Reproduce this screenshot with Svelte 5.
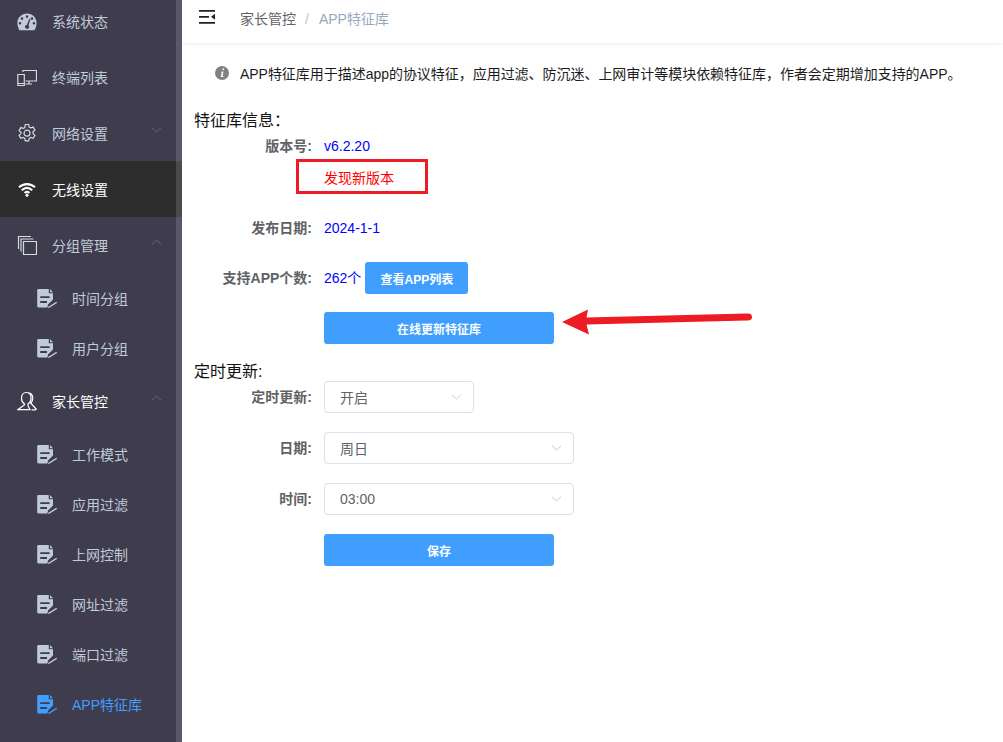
<script>
  const sub1 = ['时间分组', '用户分组'];
  const sub2 = ['工作模式', '应用过滤', '上网控制', '网址过滤', '端口过滤', 'APP特征库'];
</script>

{#snippet doc(active)}
  <svg class="doc" class:on={active} width="20" height="20" viewBox="0 0 20 20">
    <path class="fill" d="M1.500 1H11.800V5.200H16V11.500L11 16.500 10.400 19.400H1.500C.7 19.400.2 18.800.2 18V2.400C.2 1.600.7 1 1.500 1ZM13 1 16 4.200H13Z" />
    <path class="cut" d="M3.200 9.200H12.600M3.200 14H10" />
    <path class="pen" d="M11.400 19.500 19.700 14.300" />
  </svg>
{/snippet}

{#snippet chev(up)}
  <svg class="chev" width="12" height="8" viewBox="0 0 12 8"><path d={up ? 'M1 6.500 6 1.800 11 6.500' : 'M1 1.500 6 6.200 11 1.500'} /></svg>
{/snippet}

<div class="page">
  <aside class="side">
    <div class="item">
      <svg class="ic" width="20" height="20" viewBox="0 -1 20 20"><path class="solid" fill-rule="evenodd" d="M10 1.500C4.800 1.500.4 5.600.4 11c0 2.600.8 5 2 7.200h15.200c1.200-2.200 2-4.600 2-7.200 0-5.400-4.400-9.500-9.600-9.500ZM10 3.300a1.300 1.300 0 1 1 0 2.600 1.300 1.300 0 0 1 0-2.600ZM5 5.300a1.300 1.300 0 1 1 0 2.600 1.300 1.300 0 0 1 0-2.600ZM15 5.300a1.300 1.300 0 1 1 0 2.600 1.300 1.300 0 0 1 0-2.600ZM3 10a1.300 1.300 0 1 1 0 2.600A1.300 1.300 0 0 1 3 10ZM17 10a1.300 1.300 0 1 1 0 2.600 1.300 1.300 0 0 1 0-2.600ZM12.500 6.500l1 .5-2 6.500a2 2 0 1 1-1.700-.6Z" /></svg>
      <span>系统状态</span>
    </div>
    <div class="item">
      <svg class="ic" width="20" height="20" viewBox="0 0 20 20"><path class="line" d="M6 5V3.500h13.500v10.500H8.500M12 14V16.500M8.500 17H15M.8 7.500h6.500v11H.8ZM.8 16.500h6.500" /></svg>
      <span>终端列表</span>
    </div>
    <div class="item">
      <svg class="ic" width="20" height="20" viewBox="0 0 20 20"><path class="line" d="M8.300 1.500h3.400l.5 2.500 1.600.9 2.400-.8 1.700 3-1.900 1.700v1.800l1.900 1.700-1.700 3-2.400-.8-1.600.9-.5 2.500H8.300l-.5-2.500-1.600-.9-2.400.8-1.700-3 1.900-1.700V9.300L2.100 7.600l1.700-3 2.400.8 1.600-.9Z" /><circle class="line" cx="10" cy="10.200" r="3" /></svg>
      <span>网络设置</span>
      {@render chev(false)}
    </div>
    <div class="item active">
      <svg class="ic" width="20" height="20" viewBox="0 0 20 20"><path class="wifi" d="M2 8.300C6.500 4 13.500 4 18 8.300M4.800 11.200C8 8.300 12 8.300 15.200 11.200M7.600 14C9 12.800 11 12.800 12.400 14" /><circle cx="10" cy="16.300" r="1.500" fill="#fff" /></svg>
      <span>无线设置</span>
    </div>
    <div class="item">
      <svg class="ic" width="20" height="20" viewBox="0 0 20 20"><path class="line" d="M6.500 6.500h13v13h-13ZM4 16.500V4h12.500M1.500 14V1.500H14" /></svg>
      <span>分组管理</span>
      {@render chev(true)}
    </div>
    {#each sub1 as s}
      <div class="sub">{@render doc(false)}<span>{s}</span></div>
    {/each}
    <div class="item parent">
      <svg class="ic" width="20" height="20" viewBox="0 0 20 20"><path class="linew" d="M7.500 13C5 11.500 4.500 9 4.500 7.300 4.500 4 6.300 1.500 9.300 1.500s4.800 2.500 4.800 5.800c0 1.700-.6 4.200-3 5.700M7.500 12.500V13.800L.8 18.700H13l-2-4V12.500M11 1.800c3.200.2 4.800 2.400 4.800 5.500 0 1.500-.5 3.500-2 4.900l5.400 5.900-1.200.7H14.600" /></svg>
      <span>家长管控</span>
      {@render chev(true)}
    </div>
    {#each sub2 as s, i}
      <div class="sub" class:cur={i === 5}>{@render doc(i === 5)}<span>{s}</span></div>
    {/each}
    <div class="track"></div>
  </aside>

  <main class="main">
    <header class="top">
      <svg class="burger" width="16" height="14" viewBox="0 0 16 14"><path d="M0 0h16v1.800H0ZM0 6h10v1.800H0ZM0 12h16v1.800H0ZM16 3.800V9.800L12 6.800Z" /></svg>
      <nav class="crumb"><span class="c1">家长管控</span><i>/</i><span class="c2">APP特征库</span></nav>
    </header>

    <section class="content">
      <p class="tip">
        <svg width="14" height="14" viewBox="0 0 14 14"><circle cx="7" cy="7" r="7" fill="#828282" /><path d="M7.700 2.500h1.500l-.3 1.600H7.400ZM7 5.500h1.500L7.600 10h.9l-.2 1H5.800L6.700 6.500h-.8Z" fill="#fff" /></svg>
        <span>APP特征库用于描述app的协议特征，应用过滤、防沉迷、上网审计等模块依赖特征库，作者会定期增加支持的APP。</span>
      </p>

      <h3 class="head first">特征库信息：</h3>
      <div class="row double">
        <label>版本号:</label>
        <div class="val">
          <div class="line32 blue">v6.2.20</div>
          <div class="line32 red">发现新版本<span class="redbox"></span></div>
        </div>
      </div>
      <div class="row">
        <label>发布日期:</label>
        <div class="val line32 blue">2024-1-1</div>
      </div>
      <div class="row">
        <label>支持APP个数:</label>
        <div class="val line32 blue">262个<button class="btn small">查看APP列表</button></div>
      </div>
      <div class="row last">
        <label></label>
        <div class="val arrow-host">
          <button class="btn wide">在线更新特征库</button>
          <svg class="arrow" width="192" height="28" viewBox="0 0 192 28"><path d="M1 14 27 1.500 25.500 9.500 186 5.500C190 5.500 191 7 191 9 191 11 190 12.500 186 12.500L25.500 16.500 28 26.500Z" fill="#ed1c24" /></svg>
        </div>
      </div>

      <h3 class="head second">定时更新:</h3>
      <div class="row sel">
        <label>定时更新:</label>
        <div class="select s150"><span>开启</span>{@render chev(false)}</div>
      </div>
      <div class="row sel">
        <label>日期:</label>
        <div class="select"><span>周日</span>{@render chev(false)}</div>
      </div>
      <div class="row sel">
        <label>时间:</label>
        <div class="select"><span>03:00</span>{@render chev(false)}</div>
      </div>
      <div class="row sel">
        <label></label>
        <button class="btn wide">保存</button>
      </div>
    </section>
  </main>
</div>

<style>
  :global(body) {
    margin: 0;
    overflow: hidden;
    background: #fff;
    font-family: "Liberation Sans", "Noto Sans CJK SC", sans-serif;
  }
  .page {
    display: flex;
    height: 742px;
    overflow: hidden;
  }
  .side {
    position: relative;
    flex: none;
    width: 182px;
    box-sizing: border-box;
    padding-top: 1px;
    margin-top: -8px;
    height: 750px;
    background: #3f3c4d;
    color: #bfcbd9;
    font-size: 14px;
    overflow: hidden;
  }
  .track {
    position: absolute;
    top: 0;
    bottom: 0;
    right: 0;
    width: 6px;
    background: rgba(255, 255, 255, 0.14);
  }
  .item {
    display: flex;
    align-items: center;
    height: 56px;
    padding-left: 17px;
    position: relative;
  }
  .item .ic {
    flex: none;
    margin-right: 15px;
  }
  .active {
    background: #2d2d2d;
    color: #fff;
  }
  .parent {
    color: #fff;
  }
  .chev {
    position: absolute;
    left: 151px;
    top: 21px;
    width: 11px;
  }
  .chev path {
    fill: none;
    stroke: #6f6d80;
    stroke-width: 1;
  }
  .sub {
    display: flex;
    align-items: center;
    height: 50px;
    padding-left: 37px;
  }
  .sub span {
    margin-left: 15px;
  }
  .sub.cur {
    color: #409eff;
  }
  .doc {
    flex: none;
  }
  .doc .fill {
    fill: #bfcbd9;
  }
  .doc .cut {
    fill: none;
    stroke: #3f3c4d;
    stroke-width: 1.800;
  }
  .doc .pen {
    fill: none;
    stroke: #bfcbd9;
    stroke-width: 1.400;
  }
  .doc.on .fill {
    fill: #409eff;
  }
  .doc.on .pen {
    stroke: #409eff;
  }
  .solid {
    fill: #bfcbd9;
  }
  .line {
    fill: none;
    stroke: #d5dce5;
    stroke-width: 1.200;
  }
  .linew {
    fill: none;
    stroke: #fff;
    stroke-width: 1.200;
  }
  .wifi {
    fill: none;
    stroke: #fff;
    stroke-width: 2.200;
  }

  .main {
    flex: 1;
    min-width: 0;
  }
  .top {
    display: flex;
    align-items: center;
    box-sizing: border-box;
    height: 43px;
    padding: 0 0 7px 17px;
    background: #fff;
    box-shadow: 0 1px 4px rgba(0, 21, 41, 0.08);
  }
  .burger {
    flex: none;
    margin-top: -2px;
    fill: #222;
  }
  .crumb {
    margin-left: 25px;
    font-size: 14px;
    white-space: nowrap;
  }
  .c1 {
    color: #606266;
  }
  .crumb i {
    margin: 0 10px 0 9px;
    font-style: normal;
    color: #c0c4cc;
  }
  .c2 {
    color: #97a8be;
  }
  .content {
    padding: 21px 0 0 12px;
  }
  .tip {
    display: flex;
    align-items: center;
    gap: 11px;
    height: 18px;
    margin: 0 0 0 21px;
    font-size: 14px;
    letter-spacing: -0.035px;
    color: #1c1c1c;
    white-space: nowrap;
  }
  .head {
    margin: 0;
    font-size: 16px;
    font-weight: 400;
    line-height: 20px;
    color: #111;
  }
  .first {
    margin-top: 29px;
    height: 19px;
  }
  .second {
    margin-top: 18px;
    height: 19px;
  }
  .row {
    display: flex;
    margin-bottom: 18px;
    font-size: 14px;
  }
  .row.last {
    margin-bottom: 0;
  }
  .row.sel {
    margin-bottom: 19px;
  }
  label {
    flex: none;
    box-sizing: border-box;
    width: 130px;
    padding-right: 12px;
    text-align: right;
    line-height: 32px;
    font-weight: 700;
    color: #606266;
  }
  .line32 {
    height: 32px;
    line-height: 32px;
    position: relative;
  }
  .blue {
    color: #0000ff;
  }
  .red {
    color: #ff0000;
  }
  .redbox {
    position: absolute;
    left: -28px;
    top: -3px;
    width: 126px;
    height: 29px;
    border: 3px solid #ed1c24;
  }
  .btn {
    border: 0;
    height: 32px;
    border-radius: 3px;
    background: #409eff;
    color: #fff;
    font: 700 12px "Liberation Sans", "Noto Sans CJK SC", sans-serif;
    padding: 0;
  }
  .small {
    width: 103px;
    margin-left: 4px;
    vertical-align: top;
  }
  .wide {
    display: block;
    width: 230px;
  }
  .arrow-host {
    position: relative;
  }
  .arrow {
    position: absolute;
    left: 237px;
    top: -4px;
  }
  .select {
    position: relative;
    display: flex;
    align-items: center;
    box-sizing: border-box;
    width: 250px;
    height: 32px;
    padding-left: 15px;
    border: 1px solid #dcdfe6;
    border-radius: 4px;
    color: #606266;
  }
  .s150 {
    width: 150px;
  }
  .select .chev {
    left: auto;
    right: 11px;
    top: 11px;
  }
  .select .chev path {
    stroke: #c0c4cc;
  }
</style>
